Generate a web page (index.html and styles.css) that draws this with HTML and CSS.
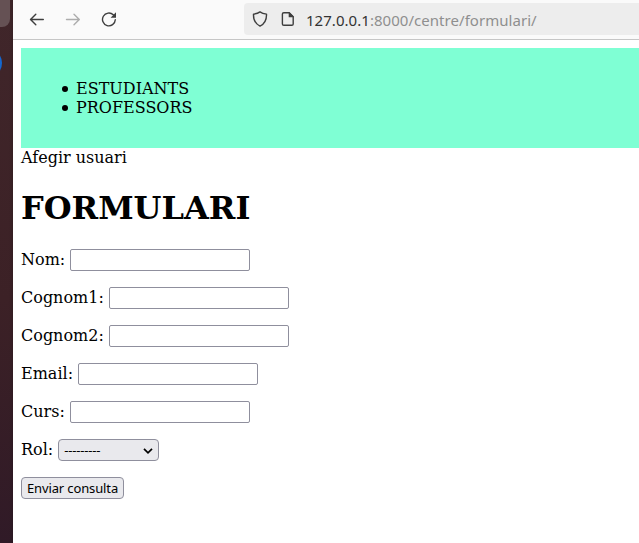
FILE: index.html
```html
<!DOCTYPE html>
<html lang="ca">
<head>
<meta charset="utf-8">
<title>Formulari</title>
<link rel="stylesheet" href="styles.css">
</head>
<body>
<div class="desktop">
  <aside class="dock"><span class="dock-tile"></span><span class="dock-app"></span></aside>
  <div class="browser">
    <header class="toolbar">
      <svg class="tool" width="16" height="16" viewBox="0 0 16 16"><path d="M14.300 8.500H1.800M6.800 3.200 1.500 8.500l5.300 5.300"/></svg>
      <svg class="tool disabled" width="16" height="16" viewBox="0 0 16 16"><path d="M1.500 8.500H14M9 3.200l5.300 5.300L9 13.800"/></svg>
      <svg class="tool" width="16" height="16" viewBox="0 0 16 16"><path d="M12.300 3.800A6.400 6.400 0 1 0 14.300 8.800"/><path class="solid" d="M15 1.300v5.400H9.600z"/></svg>
      <div class="address">
        <svg class="tool" width="16" height="16" viewBox="0 0 16 16"><path d="M8 .9C6.500 2.100 4 2.900 1.500 3.100c-.2 5 1.500 9.500 6.500 12 5-2.500 6.700-7 6.500-12C12 2.900 9.500 2.100 8 .9z"/></svg>
        <svg class="tool page" width="16" height="16" viewBox="0 0 16 16"><path d="M3.800 1.700h5.400l4 4v7.200q0 1.400-1.400 1.400h-8q-1.400 0-1.400-1.400V3.100q0-1.400 1.400-1.400z"/><path class="solid" d="M8.700 1.200h.8l4.200 4.200v.9H8.700z"/></svg>
        <div class="url"><span class="host">127.0.0.1</span><span class="path">:8000/centre/formulari/</span></div>
      </div>
    </header>
    <main class="page-body">
      <nav class="menu"><ul><li>ESTUDIANTS</li><li>PROFESSORS</li></ul></nav>
      <div>Afegir usuari</div>
      <h1>FORMULARI</h1>
      <form>
        <p><label for="nom">Nom:</label><input id="nom" type="text"></p>
        <p><label for="cognom1">Cognom1:</label><input id="cognom1" type="text"></p>
        <p><label for="cognom2">Cognom2:</label><input id="cognom2" type="text"></p>
        <p><label for="email">Email:</label><input id="email" type="text"></p>
        <p><label for="curs">Curs:</label><input id="curs" type="text"></p>
        <p><label for="rol">Rol:</label><span class="select"><select id="rol"><option>---------</option></select><svg width="10" height="6" viewBox="0 0 10 6"><path d="M1 .8 5 4.800 9 .8"/></svg></span></p>
        <button type="button"><span>Enviar consulta</span></button>
      </form>
    </main>
  </div>
</div>
</body>
</html>
```
FILE: styles.css
```css
* { box-sizing: border-box; }
body { margin: 0; overflow: hidden; background: #fff; color: #000; font: 16px/19px "DejaVu Serif", serif; }
.desktop { display: flex; height: 543px; }
.dock { position: relative; flex: 0 0 13px; overflow: hidden; background: linear-gradient(90deg, transparent 70%, rgba(0,0,0,.15)), linear-gradient(#40262a, #3c2126 55%, #301a27); }
.dock-tile { position: absolute; right: 3px; top: -20px; width: 40px; height: 47px; border-radius: 8px; background: #655154; }
.dock-app { position: absolute; right: 11px; top: 48px; width: 30px; height: 30px; border-radius: 50%; background: #1468d0; }
.browser { flex: 1; min-width: 0; }
.toolbar { display: flex; align-items: center; height: 40px; padding: 0 0 1px 16px; gap: 20px; background: #fafafa; border-bottom: 1px solid #c6c6c6; }
.tool { flex: none; fill: none; stroke: #3e3e3e; stroke-width: 1.4; stroke-linecap: round; stroke-linejoin: round; }
.tool .solid { fill: #3e3e3e; stroke: none; }
.disabled { stroke: #adadad; }
.address { display: flex; align-items: center; flex: 1; height: 32px; margin: 0 0 0 107px; padding-left: 8px; border-radius: 4px 0 0 4px; background: #ededed; }
.page { margin-left: 12px; }
.url { margin: 1px 0 0 10px; white-space: nowrap; font: 15px/20px "Noto Sans", sans-serif; letter-spacing: .04px; color: #8f8f8f; }
.host { color: #333; }
.page-body { padding: 8px 0 0 8px; }
.menu { padding: 15px; background: #7fffd4; }
ul { margin: 16px 0; padding-left: 40px; list-style: none; }
li { display: flex; align-items: center; }
li::before { content: ""; width: 6px; height: 6px; margin: 1px 8px 0 -14px; border-radius: 50%; background: #000; }
h1 { margin: 22px 0; font-size: 32px; line-height: 38px; }
p { display: flex; align-items: center; height: 22px; margin: 0 0 16px; gap: 5px; }
label { margin-top: -1px; }
input { width: 180px; height: 22px; border: 1px solid #8f8f9d; border-radius: 2px; background: #fff; }
.select { position: relative; display: flex; }
select { appearance: none; width: 101px; height: 22px; padding: 0 5px; border: 1px solid #8f8f9d; border-radius: 4px; background: #e9e9ed; color: #000; font: 13px "Noto Sans", sans-serif; letter-spacing: -.18px; }
.select svg { position: absolute; right: 6px; top: 9px; fill: none; stroke: #000; stroke-width: 1.7; }
button { display: block; width: 103px; height: 22px; padding: 0; border: 1px solid #8f8f9d; border-radius: 4px; background: #e9e9ed; color: #000; font: 13px/20px "Noto Sans", sans-serif; letter-spacing: -.12px; white-space: nowrap; }
```
